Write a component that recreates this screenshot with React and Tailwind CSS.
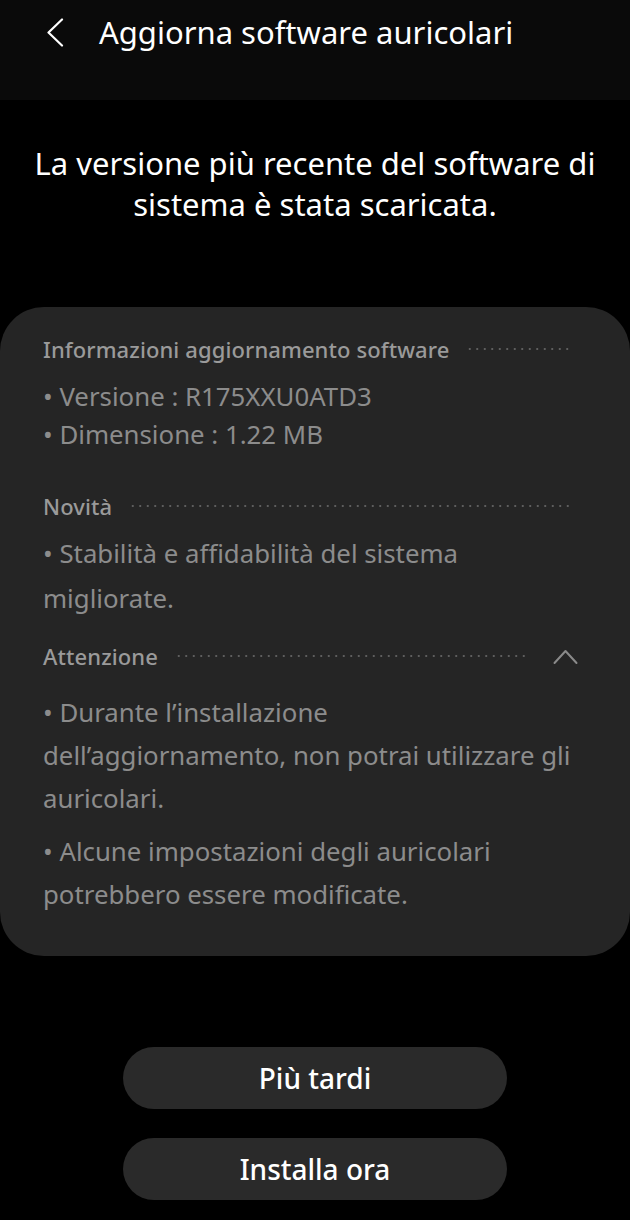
const FONT = "font-['Noto_Sans','Roboto',sans-serif]"

const Dots = () => (
  <div className="h-[2px] flex-1 bg-[radial-gradient(circle,#5e5e5e_0.9px,transparent_1.1px)] bg-[length:7.5px_2px] bg-repeat-x" />
)

const SectionHead = ({ title, chevron = false }) => (
  <div className="flex h-[44px] items-center">
    <span className="text-[22px] font-medium tracking-[0.1px] text-[#9a9a9a]">{title}</span>
    <div className="ml-[17px] flex flex-1">
      <Dots />
    </div>
    {chevron && (
      <svg width="25" height="17" viewBox="0 0 25 17" className="ml-[26px] mr-[-8px]" fill="none">
        <polyline points="1.5,15 12.5,3 23.5,15" stroke="#8a8a8a" strokeWidth="2" strokeLinecap="round" strokeLinejoin="round" />
      </svg>
    )}
  </div>
)

export default function App() {
  return (
    <div className={`min-h-[1220px] w-[630px] bg-black text-white ${FONT}`}>
      <header className="flex h-[100px] items-start bg-[#0a0a0a]">
        <div className="flex h-[64px] items-center pl-[46px]">
          <svg width="18" height="29" viewBox="0 0 18 29" fill="none">
            <polyline points="16,1.5 2.5,14.5 16,27.5" stroke="#fff" strokeWidth="2.2" strokeLinecap="round" strokeLinejoin="round" />
          </svg>
          <h1 className="ml-[35px] text-[31px]">Aggiorna software auricolari</h1>
        </div>
      </header>

      <p className="mt-[43px] px-2 text-center text-[31px] leading-[41px]">
        La versione più recente del software di
        <br />
        sistema è stata scaricata.
      </p>

      <section className="mt-[82px] rounded-[44px] bg-[#252525] pb-[40px] pl-[43px] pr-[60px] pt-[20px] text-[25.8px] whitespace-nowrap text-[#8c8c8c]">
        <SectionHead title="Informazioni aggiornamento software" />
        <div className="mt-[6px] leading-[38px]">
          <p>• Versione : R175XXU0ATD3</p>
          <p>• Dimensione : 1.22 MB</p>
        </div>

        <div className="mt-[31px]">
          <SectionHead title="Novità" />
        </div>
        <p className="mt-[3px] leading-[45px]">
          • Stabilità e affidabilità del sistema
          <br />
          migliorate.
        </p>

        <div className="mt-[13px]">
          <SectionHead title="Attenzione" chevron />
        </div>
        <div className="mt-[13px] leading-[43px]">
          <p>
            • Durante l’installazione
            <br />
            dell’aggiornamento, non potrai utilizzare gli
            <br />
            auricolari.
          </p>
          <p className="mt-[10px]">
            • Alcune impostazioni degli auricolari
            <br />
            potrebbero essere modificate.
          </p>
        </div>
      </section>

      <div className="mt-[91px] flex flex-col items-center gap-[29px]">
        <button type="button" className="h-[62px] w-[384px] rounded-full bg-[#2a2a2a] text-[28px] font-medium text-white">
          Più tardi
        </button>
        <button type="button" className="h-[62px] w-[384px] rounded-full bg-[#2a2a2a] text-[28px] font-medium text-white">
          Installa ora
        </button>
      </div>
    </div>
  )
}
